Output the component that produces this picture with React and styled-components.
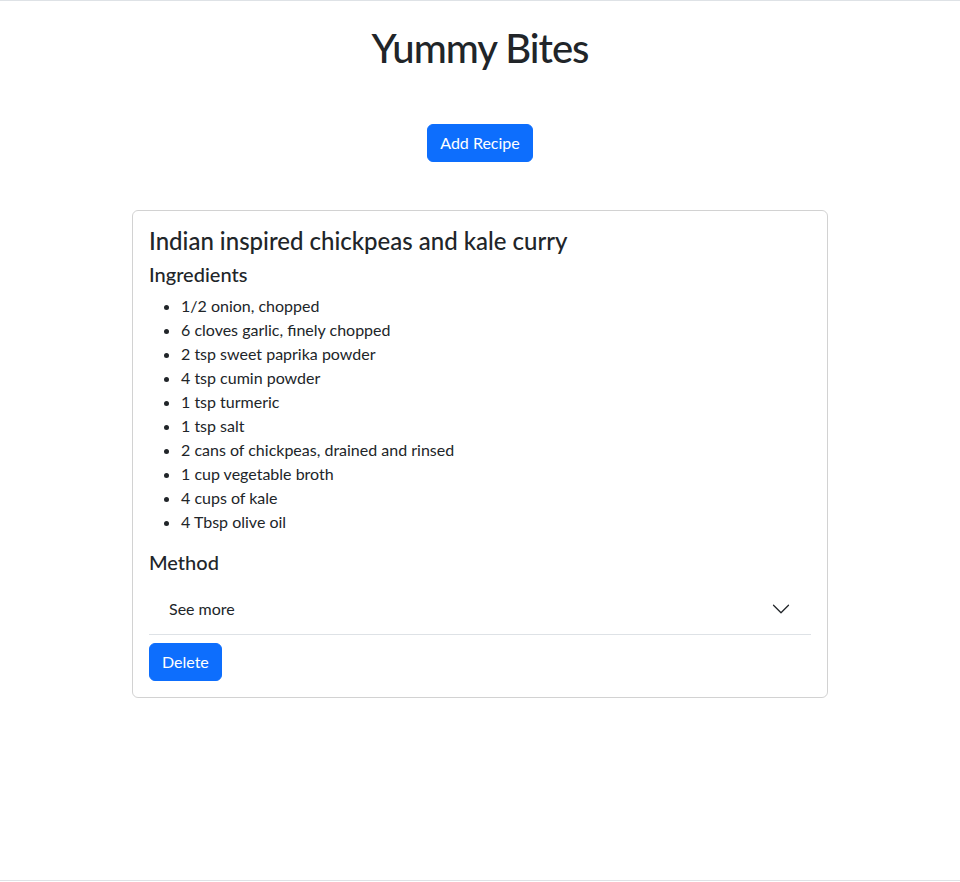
import React, { useState } from "react";
import styled, { createGlobalStyle } from "styled-components";

const Global = createGlobalStyle`
  *, *::before, *::after { box-sizing: border-box; }
  html, body { margin: 0; padding: 0; background: #fff; }
  body {
    font-family: Lato, "Noto Sans", sans-serif;
    font-size: 16px;
    line-height: 1.5;
    color: #212529;
  }
`;

const Page = styled.div`
  height: 881px;
  border-top: 1px solid #dee2e6;
  border-bottom: 1px solid #dee2e6;
  display: flex;
  flex-direction: column;
  align-items: center;
`;

const Title = styled.h1`
  margin: 23px 0 0;
  font-size: 40px;
  font-weight: 500;
  line-height: 1.2;
  letter-spacing: -1px;
`;

const Button = styled.button`
  font-family: inherit;
  font-size: 16px;
  line-height: 1.5;
  color: #fff;
  background: #0d6efd;
  border: 1px solid #0d6efd;
  border-radius: 6px;
  padding: 6px 12px;
  cursor: pointer;
  margin-top: ${(p) => p.$mt || 0}px;
  align-self: ${(p) => p.$align || "auto"};
`;

const Card = styled.div`
  margin-top: 48px;
  width: 696px;
  border: 1px solid rgba(0, 0, 0, 0.175);
  border-radius: 6px;
  padding: 16px;
  display: flex;
  flex-direction: column;
`;

const CardTitle = styled.h4`
  margin: 0 0 6px;
  font-size: 24px;
  font-weight: 500;
  line-height: 1.2;
`;

const SubTitle = styled.h5`
  margin: 0 0 8px;
  font-size: 20px;
  font-weight: 500;
  line-height: 1.2;
`;

const List = styled.ul`
  margin: 0 0 16px;
  padding-left: 32px;
`;

const Item = styled.li`
  line-height: 24px;
`;

const AccItem = styled.div`
  border-bottom: 1px solid #dee2e6;
  margin-top: -1px;
`;

const AccButton = styled.button`
  width: 100%;
  display: flex;
  align-items: center;
  justify-content: space-between;
  padding: 16px 20px 13px;
  font-family: inherit;
  font-size: 16px;
  line-height: 1.5;
  color: #212529;
  background: #fff;
  border: 0;
  text-align: left;
  cursor: pointer;
`;

const Chevron = styled.svg`
  width: 20px;
  height: 20px;
  flex-shrink: 0;
  transition: transform 0.2s;
  transform: ${(p) => (p.$open ? "rotate(-180deg)" : "none")};
`;

const AccBody = styled.div`
  padding: 16px 20px;
`;

const ingredients = [
  "1/2 onion, chopped",
  "6 cloves garlic, finely chopped",
  "2 tsp sweet paprika powder",
  "4 tsp cumin powder",
  "1 tsp turmeric",
  "1 tsp salt",
  "2 cans of chickpeas, drained and rinsed",
  "1 cup vegetable broth",
  "4 cups of kale",
  "4 Tbsp olive oil",
];

export default function App() {
  const [open, setOpen] = useState(false);
  return (
    <>
      <Global />
      <Page>
        <Title>Yummy Bites</Title>
        <Button $mt={52}>Add Recipe</Button>
        <Card>
          <CardTitle>Indian inspired chickpeas and kale curry</CardTitle>
          <SubTitle>Ingredients</SubTitle>
          <List>
            {ingredients.map((i) => (
              <Item key={i}>{i}</Item>
            ))}
          </List>
          <SubTitle>Method</SubTitle>
          <AccItem>
            <AccButton onClick={() => setOpen(!open)}>
              <span>See more</span>
              <Chevron $open={open} viewBox="0 0 16 16" fill="none" stroke="#212529" strokeLinecap="round" strokeLinejoin="round">
                <path d="M2 5L8 11L14 5" />
              </Chevron>
            </AccButton>
            {open && <AccBody>Heat the oil and fry the onion and garlic, add spices, chickpeas, broth and kale, and simmer.</AccBody>}
          </AccItem>
          <Button $mt={8} $align="flex-start">Delete</Button>
        </Card>
      </Page>
    </>
  );
}
